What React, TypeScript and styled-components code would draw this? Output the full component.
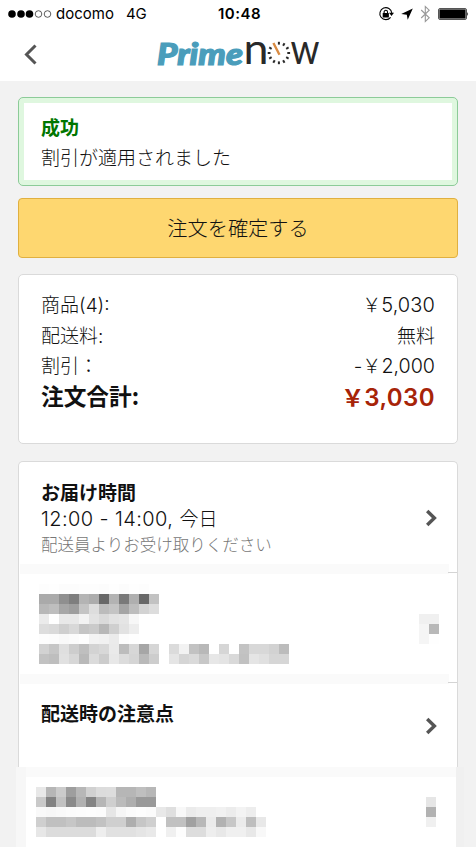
import React from 'react';
import styled, { createGlobalStyle } from 'styled-components';

const jp = '"Noto Sans CJK JP", sans-serif';

const GlobalStyle = createGlobalStyle`
  * { box-sizing: border-box; }
  body { margin: 0; background: #f2f2f2; overflow: hidden; }
`;

const Screen = styled.main`
  width: 476px;
  height: 847px;
  overflow: hidden;
  display: flex;
  flex-direction: column;
  background: #f2f2f2;
  color: #111;
  font-family: ${jp};
`;

const StatusBar = styled.div`
  height: 27px;
  flex: none;
  display: grid;
  grid-template-columns: 1fr auto 1fr;
  align-items: center;
  padding: 0 7px 0 8px;
  background: #fff;
  color: #000;
  font: 400 15px/27px Inter, sans-serif;
`;

const Carrier = styled.div`
  display: flex;
  align-items: center;
`;

const Label = styled.span<{ $gap: number }>`
  margin-left: ${p => p.$gap}px;
`;

const Clock = styled.div`
  font-weight: 600;
  letter-spacing: 0.5px;
  padding-left: 2px;
`;

const Indicators = styled.div`
  display: flex;
  justify-content: flex-end;
`;

const Header = styled.header`
  height: 54px;
  flex: none;
  display: grid;
  grid-template-columns: 100px 1fr 100px;
  background: #fff;
`;

const BackButton = styled.button`
  border: 0;
  padding: 0 0 0 20px;
  background: none;
  display: flex;
`;

const LogoBox = styled.div`
  display: flex;
  justify-content: center;
`;

const LogoSvg = styled.svg`
  overflow: visible;
`;

const Content = styled.div`
  flex: none;
  padding: 16px 18px 0;
  display: flex;
  flex-direction: column;
`;

const Notice = styled.section`
  height: 89px;
  border: 1px solid #8ccb98;
  border-radius: 5px;
  background: #dff7df;
  padding: 5px;
  display: flex;
`;

const NoticeBody = styled.div`
  flex: 1;
  background: #fff;
  padding: 9px 17px 0;
`;

const Text = styled.div<{ $size: number; $line: number; $bold?: boolean; $color?: string }>`
  font-size: ${p => p.$size}px;
  height: ${p => p.$line}px;
  line-height: ${p => p.$line}px;
  font-weight: ${p => (p.$bold ? 700 : 300)};
  color: ${p => p.$color ?? '#111'};
  white-space: nowrap;
`;

const Num = styled.span<{ $size?: number; $bold?: boolean; $spacing?: number }>`
  font-family: Inter, sans-serif;
  font-size: ${p => p.$size ?? 19}px;
  line-height: 1;
  font-weight: ${p => (p.$bold ? 600 : 300)};
  letter-spacing: ${p => p.$spacing ?? 0}px;
`;

const ConfirmButton = styled.button`
  height: 60px;
  margin-top: 12px;
  padding: 0;
  border: 1px solid #e0b040;
  border-radius: 4px;
  background: #fed770;
  color: #111;
  font: 300 20.2px/58px ${jp};
`;

const Card = styled.section`
  border: 1px solid #dadada;
  border-radius: 5px;
  background: #fff;
`;

const Summary = styled(Card)`
  height: 170px;
  margin-top: 16px;
  padding: 14px 22px 0;
`;

const SummaryRow = styled.div`
  display: flex;
  justify-content: space-between;
`;

const Details = styled(Card)`
  height: 306px;
  margin-top: 17px;
  border-bottom: 0;
  border-radius: 5px 5px 0 0;
`;

const DetailRow = styled.div<{ $height: number; $top: number }>`
  height: ${p => p.$height}px;
  padding: ${p => p.$top}px 18px 0 22px;
  display: flex;
  justify-content: space-between;
  align-items: flex-start;
`;

const ChevronBox = styled.div<{ $top: number }>`
  display: flex;
  margin-top: ${p => p.$top}px;
`;

const Band = styled.div`
  height: 10px;
  display: flex;
  align-items: flex-end;
  justify-content: flex-end;
  background: linear-gradient(#fafafa, #fafafa) 1px 0 / 429px 100% no-repeat;
`;

const BandLine = styled.div`
  width: 9px;
  height: 1px;
  margin-bottom: 1px;
  background: #d4d4d4;
`;

const MosaicRow = styled.div<{ $height: number; $top: number; $left: number; $right: number }>`
  height: ${p => p.$height}px;
  padding: ${p => p.$top}px ${p => p.$right}px 0 ${p => p.$left}px;
  display: flex;
  justify-content: space-between;
  align-items: flex-start;
`;

const Footer = styled.section`
  height: 80px;
  flex: none;
  margin: 0 12px 0 16px;
  padding: 10px 8px 0 10px;
  background:
    linear-gradient(#f0f0f0, #f0f0f0) right top / 8px 100% no-repeat,
    linear-gradient(#f7f7f7, #f7f7f7) left top / 10px 100% no-repeat,
    linear-gradient(#fafafa, #fafafa) left top / 100% 10px no-repeat,
    #fff;
`;

/* Grey level of each 10px tile, row by row. */
const addressTiles: number[][] = [
  [253, 254, 252, 252, 253, 253, 252, 254, 252, 254, 253, 255],
  [170, 170, 143, 126, 180, 172, 104, 179, 121, 175, 104, 194],
  [184, 190, 166, 158, 196, 221, 188, 196, 165, 189, 211, 221],
  [235, 255, 232, 232, 243, 226, 218, 226, 229, 247],
  [221, 218, 207, 216, 197, 202, 183, 207, 226, 237],
  [253, 252, 249, 251, 254, 243, 241, 235, 252, 254],
  [210, 198, 223, 205, 191, 211, 216, 234, 188, 215, 166, 214, 255, 219, 242, 194, 184, 255, 214, 255, 195, 216, 216, 210, 188],
  [194, 190, 225, 215, 185, 219, 204, 232, 220, 213, 185, 205, 255, 229, 213, 218, 199, 231, 228, 217, 193, 229, 224, 214, 214],
];

const footerTiles: number[][] = [
  [232, 182, 203, 158, 183, 209, 220, 221, 182, 182, 191, 183],
  [201, 130, 193, 138, 177, 132, 182, 207, 187, 174, 153, 153],
  [249, 247, 249, 251, 252, 253, 252, 230, 246, 251, 253, 251, 232, 223, 248, 235, 239, 239, 241, 236, 243, 237],
  [207, 192, 192, 198, 188, 188, 194, 207, 207, 174, 198, 207, 255, 193, 193, 161, 184, 235, 178, 199, 235, 190, 232],
  [231, 220, 220, 220, 220, 220, 238, 225, 225, 225, 229, 233, 255, 240, 253, 221, 221, 238, 232, 240, 240, 232, 248],
];

function Mosaic({ tiles }: { tiles: number[][] }) {
  const cols = Math.max(...tiles.map(r => r.length));
  return (
    <svg width={cols * 10} height={tiles.length * 10} shapeRendering="crispEdges">
      {tiles.flatMap((row, y) =>
        row.map((g, x) => (
          <rect key={`${x}-${y}`} x={x * 10} y={y * 10} width="10" height="10" fill={`rgb(${g},${g},${g})`} />
        )),
      )}
    </svg>
  );
}

const Chevron = () => (
  <svg width="16" height="20" viewBox="0 0 16 20" fill="none" stroke="#555" strokeWidth="3.4">
    <path d="M4.2 3 L11.4 10 L4.2 17" />
  </svg>
);

const Signal = () => (
  <svg width="44" height="12" viewBox="0 0 44 12">
    {[4, 13, 21.5].map(x => <circle key={x} cx={x} cy="6" r="3.8" />)}
    {[30.5, 39.5].map(x => <circle key={x} cx={x} cy="6" r="3.3" fill="none" stroke="#333" strokeWidth=".8" />)}
  </svg>
);

const StatusIcons = () => (
  <svg width="96" height="20" viewBox="373 3 96 20">
    <path d="M390.6 16.3 A6 6 0 1 1 391.8 12" fill="none" stroke="#000" strokeWidth="1.1" />
    <path d="M389 11.8 H394 L391.5 15 Z" />
    <rect x="382.7" y="12" width="6.2" height="4.4" rx=".5" />
    <path d="M384.1 12.5 V11 a1.7 1.7 0 0 1 3.4 0 V12.5" fill="none" stroke="#000" strokeWidth="1.1" />
    <path d="M412.8 7.6 L407.7 18.8 L406.8 13.8 L401.2 13 Z" />
    <path d="M421.2 9 L429.2 16.8 L425.3 20.4 V5.6 L429.2 9.2 L421.2 17" fill="none" stroke="#999" strokeWidth="1.1" />
    <rect x="438.5" y="7.5" width="28" height="11" rx="1.5" fill="#fff" stroke="#555" />
    <rect x="439.4" y="8.4" width="26.2" height="9.2" />
    <path d="M467.3 11 q1.7 2 0 4 Z" />
  </svg>
);

const Logo = () => (
  <LogoSvg width="180" height="54" viewBox="148 27 180 54">
    <text x="157" y="64.5" textLength="86" lengthAdjust="spacingAndGlyphs" fontFamily="Lato" fontWeight="900" fontStyle="italic" fontSize="30.5" fill="#4a9dbb" stroke="#4a9dbb" strokeWidth="1.2">Prime</text>
    <g fontFamily="Lato" fontWeight="400" fontSize="42" fill="#292929">
      <text x="243.5" y="64" textLength="25" lengthAdjust="spacingAndGlyphs">n</text>
      <text x="290.5" y="64" textLength="29" lengthAdjust="spacingAndGlyphs">w</text>
    </g>
    {Array.from({ length: 11 }, (_, i) => (
      <rect key={i} x="277.9" y="41.8" width="2" height="2.8" fill="#292929" transform={`rotate(${i * 30} 278.9 53)`} />
    ))}
    <path d="M273.4 43 L279.5 54.7" stroke="#d98b42" strokeWidth="2.4" />
  </LogoSvg>
);

export default function App() {
  return (
    <Screen>
      <GlobalStyle />
      <StatusBar>
        <Carrier>
          <Signal />
          <Label $gap={4}>docomo</Label>
          <Label $gap={12}>4G</Label>
        </Carrier>
        <Clock>10:48</Clock>
        <Indicators><StatusIcons /></Indicators>
      </StatusBar>
      <Header>
        <BackButton aria-label="戻る">
          <svg width="20" height="54" viewBox="20 27 20 54" fill="none" stroke="#555" strokeWidth="3">
            <path d="M35.5 45.5 L26.5 54.5 L35.5 63.5" />
          </svg>
        </BackButton>
        <LogoBox><Logo /></LogoBox>
      </Header>
      <Content>
        <Notice>
          <NoticeBody>
            <Text $size={19} $line={30} $bold $color="#007600">成功</Text>
            <Text $size={19} $line={30}>割引が適用されました</Text>
          </NoticeBody>
        </Notice>
        <ConfirmButton>注文を確定する</ConfirmButton>
        <Summary>
          <SummaryRow>
            <Text $size={19} $line={30.5}>商品<Num>(4):</Num></Text>
            <Text $size={19} $line={30.5}>￥<Num $size={20} $spacing={0.1}>5,030</Num></Text>
          </SummaryRow>
          <SummaryRow>
            <Text $size={19} $line={30.5}>配送料<Num>:</Num></Text>
            <Text $size={19} $line={30.5}>無料</Text>
          </SummaryRow>
          <SummaryRow>
            <Text $size={19} $line={30.5}>割引：</Text>
            <Text $size={19} $line={30.5}><Num>-</Num>￥<Num $size={19.7}>2,000</Num></Text>
          </SummaryRow>
          <SummaryRow>
            <Text $size={22.7} $line={30} $bold>注文合計:</Text>
            <Text $size={23} $line={30} $bold $color="#a72408">￥<Num $bold $size={24} $spacing={0.4}>3,030</Num></Text>
          </SummaryRow>
        </Summary>
        <Details>
          <DetailRow $height={102} $top={17}>
            <div>
              <Text $size={19} $line={25.5} $bold>お届け時間</Text>
              <Text $size={19} $line={26}><Num $size={20} $spacing={0.4}>12:00 - 14:00, </Num>今日</Text>
              <Text $size={16.5} $line={26} $color="#777">配送員よりお受け取りください</Text>
            </div>
            <ChevronBox $top={28.5}><Chevron /></ChevronBox>
          </DetailRow>
          <Band><BandLine /></Band>
          <MosaicRow $height={100} $top={10} $left={20} $right={18}>
            <Mosaic tiles={addressTiles} />
            <ChevronBox $top={30}><Mosaic tiles={[[240, 240], [245, 184], [245, 254]]} /></ChevronBox>
          </MosaicRow>
          <Band><BandLine /></Band>
          <DetailRow $height={83} $top={16}>
            <Text $size={19} $line={26} $bold>配送時の注意点</Text>
            <ChevronBox $top={16}><Chevron /></ChevronBox>
          </DetailRow>
        </Details>
      </Content>
      <Footer>
        <MosaicRow $height={70} $top={10} $left={10} $right={20}>
          <Mosaic tiles={footerTiles} />
          <ChevronBox $top={10}><Mosaic tiles={[[230], [178], [240]]} /></ChevronBox>
        </MosaicRow>
      </Footer>
    </Screen>
  );
}
